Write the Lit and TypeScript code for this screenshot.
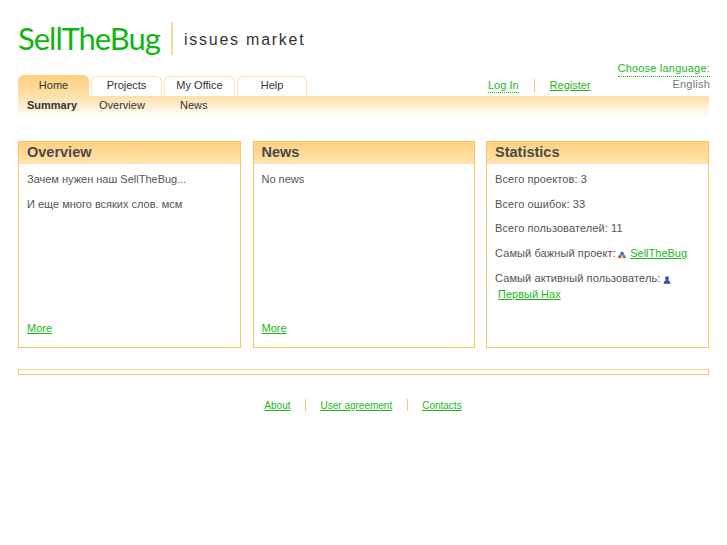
import { LitElement, html, css } from "lit";
import { customElement } from "lit/decorators.js";

@customElement("app-root")
export class AppRoot extends LitElement {
  static styles = css`
    :host { display: block; width: 727px; height: 545px; background: #fff; overflow: hidden;
      font-family: "Liberation Sans", Arial, sans-serif; font-size: 11px; color: #555; }
    a { color: #1ab81a; text-decoration: underline; }
    .page { padding: 0 18px; display: flex; flex-direction: column; }
    .logo { display: flex; align-items: center; height: 33px; margin-top: 22px; }
    .brand { font-family: "Lato", sans-serif; font-size: 31px; letter-spacing: -1px; color: #11b511; line-height: 33px; width: 153px; }
    .logo-sep { width: 2px; height: 33px; background: #fdd698; }
    .tagline { margin-left: 11px; padding-top: 2px; font-size: 16px; letter-spacing: 1.75px; color: #333; }
    .nav { display: flex; justify-content: space-between; align-items: flex-end; height: 20px; margin-top: 21px; position: relative; }
    .tabs { display: flex; gap: 2px; align-items: flex-end; }
    .tab { box-sizing: border-box; width: 71px; height: 20px; border: 1px solid #fee3b5; border-bottom: 0; border-radius: 6px 6px 0 0;
      text-align: center; line-height: 16px; color: #333; background: #fff; }
    .tab:last-child { width: 70px; }
    .tab.on { height: 21px; border: 0; background: linear-gradient(#ffcf80, #ffe0aa); line-height: 20px; }
    .right { display: flex; align-items: flex-end; width: 221px; position: relative; }
    .lang { position: absolute; right: -1px; top: -14px; text-align: right; letter-spacing: .2px; }
    .lang a { text-decoration: none; border-bottom: 1px dotted #1ab81a; display: block; line-height: 13px; padding-bottom: 1px; }
    .lang span { display: block; color: #777; line-height: 14px; }
    .auth { display: flex; box-sizing: border-box; align-items: center; height: 20px; padding-bottom: 2px; }
    .auth a { line-height: 14px; }
    .login { text-decoration: none; border-bottom: 1px dotted #1ab81a; }
    .auth i { width: 1px; height: 13px; background: #fdc66b; margin: 0 15px; }
    .sub { display: flex; box-sizing: border-box; height: 21px; padding-bottom: 4px; align-items: center; background: linear-gradient(#fedfa8, #fff); color: #333; }
    .sub span { display: block; }
    .sub .s1 { width: 81px; padding-left: 9px; box-sizing: border-box; font-weight: bold; }
    .sub .s2 { width: 81px; }
    .cards { display: grid; grid-template-columns: 223px 222px 223px; gap: 12px 11.5px; margin-top: 24px; }
    .card { box-sizing: border-box; height: 207px; border: 1px solid #fdc465; display: flex; flex-direction: column; }
    h2 { margin: 0; height: 22px; line-height: 21px; padding-left: 8px; font-size: 14.5px; font-weight: bold; color: #4a4a4a;
      background: linear-gradient(#ffd082, #ffe3ae); }
    .body { padding: 9px 8px 0; flex: 1; display: flex; flex-direction: column; }
    .stats { letter-spacing: .1px; }
    p { margin: 0 0 11.7px; line-height: 13px; }
    .more { margin-top: auto; margin-bottom: 12px; line-height: 13px; }
    .stats a { letter-spacing: 0; }
    .icon { vertical-align: -2px; margin: 0 1px 0 -1px; }
    .user { display: inline-block; margin: 3px 0 0 3px; }
    .bar { height: 6px; box-sizing: border-box; margin-top: 21px; border: 1px solid #fdc465; border-top-color: #fed693; }
    .footer { display: flex; justify-content: center; align-items: center; margin-top: 23px; padding-right: 1px; height: 14px; font-size: 10px; }
    .footer i { width: 1px; height: 12px; background: #fdc66b; margin: 0 14.5px; }
  `;

  render() {
    return html`<div class="page">
      <div class="logo">
        <div class="brand">SellTheBug</div>
        <div class="logo-sep"></div>
        <div class="tagline">issues market</div>
      </div>
      <div class="nav">
        <div class="tabs">
          <div class="tab on">Home</div>
          <div class="tab">Projects</div>
          <div class="tab">My Office</div>
          <div class="tab">Help</div>
        </div>
        <div class="right">
          <div class="auth">
            <a class="login" href="#">Log In</a><i></i><a href="#">Register</a>
          </div>
          <div class="lang"><a href="#">Choose language:</a><span>English</span></div>
        </div>
      </div>
      <div class="sub">
        <span class="s1">Summary</span><span class="s2">Overview</span><span>News</span>
      </div>
      <div class="cards">
        <div class="card">
          <h2>Overview</h2>
          <div class="body">
            <p>Зачем нужен наш SellTheBug...</p>
            <p>И еще много всяких слов. мсм</p>
            <a class="more" href="#">More</a>
          </div>
        </div>
        <div class="card">
          <h2>News</h2>
          <div class="body">
            <p>No news</p>
            <a class="more" href="#">More</a>
          </div>
        </div>
        <div class="card">
          <h2>Statistics</h2>
          <div class="body stats">
            <p>Всего проектов: 3</p>
            <p>Всего ошибок: 33</p>
            <p>Всего пользователей: 11</p>
            <p>Самый бажный проект:
              <svg class="icon" width="8" height="8" viewBox="0 0 8 8"><circle cx="1.8" cy="5.8" r="1.8" fill="#d0503a"/><circle cx="6.2" cy="5.8" r="1.8" fill="#5c9a55"/><circle cx="4" cy="2.8" r="2" fill="#3f70c0"/></svg>
              <a href="#">SellTheBug</a></p>
            <p>Самый активный пользователь:
              <svg class="icon" width="8" height="8" viewBox="0 0 8 8"><circle cx="4" cy="2.2" r="1.9" fill="#2f4aa8"/><path d="M0.5 7.8 C1 5 2.5 4 4 4 C5.5 4 7 5 7.5 7.8Z" fill="#2f4aa8"/></svg><br>
              <a class="user" href="#">Первый Нах</a></p>
          </div>
        </div>
      </div>
      <div class="bar"></div>
      <div class="footer">
        <a href="#">About</a><i></i><a href="#">User agreement</a><i></i><a href="#">Contacts</a>
      </div>
    </div>`;
  }
}
